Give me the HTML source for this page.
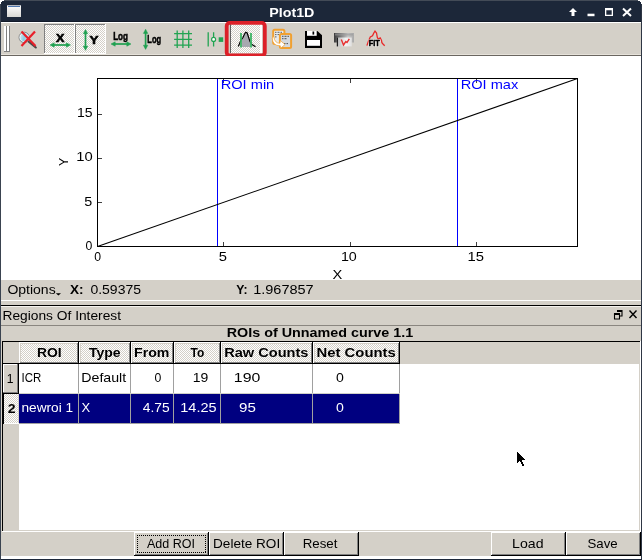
<!DOCTYPE html>
<html><head><meta charset="utf-8"><style>
html,body{margin:0;padding:0;width:642px;height:560px;overflow:hidden;background:#d4d0c8}
svg{display:block;will-change:transform;font-family:"Liberation Sans",sans-serif}
</style></head><body>
<svg width="642" height="560" viewBox="0 0 642 560" font-family="Liberation Sans, sans-serif">
<rect x="0" y="0" width="642" height="560" fill="#d4d0c8"/>
<rect x="0" y="0" width="642" height="22" fill="#1c2739"/>
<rect x="0" y="0" width="642" height="1" fill="#434b57"/>
<rect x="0" y="21" width="642" height="1" fill="#121a28"/>
<rect x="0" y="22" width="642" height="1" fill="#ffffff"/>
<rect x="0" y="0" width="1" height="560" fill="#1c2739"/>
<rect x="641" y="0" width="1" height="560" fill="#2e3644"/>
<rect x="0" y="559" width="642" height="1" fill="#1c2739"/>
<rect x="0" y="4" width="1" height="556" fill="#3a4350"/>
<path d="M0 0 H4 V1 H2 V2 H1 V4 H0 Z" fill="#ffffff"/><path d="M638 0 H642 V4 H641 V2 H640 V1 H638 Z" fill="#ffffff"/>
<defs><linearGradient id="wig" x1="0" y1="0" x2="0" y2="1"><stop offset="0" stop-color="#ffffff"/><stop offset="1" stop-color="#d8d8d4"/></linearGradient><pattern id="chk" x="0" y="0" width="2" height="2" patternUnits="userSpaceOnUse"><rect width="2" height="2" fill="#ffffff"/><rect width="1" height="1" fill="#d4d0c8"/><rect x="1" y="1" width="1" height="1" fill="#d4d0c8"/></pattern><linearGradient id="mag" x1="0" y1="0" x2="1" y2="0.3"><stop offset="0" stop-color="#f0f4f6"/><stop offset="0.6" stop-color="#8ccce4"/><stop offset="1" stop-color="#c8e4ee"/></linearGradient><linearGradient id="prn" x1="0" y1="0" x2="1" y2="0"><stop offset="0" stop-color="#606060"/><stop offset="0.5" stop-color="#d8d8d8"/><stop offset="1" stop-color="#909090"/></linearGradient></defs>
<rect x="7" y="5" width="14" height="12" fill="url(#wig)"/>
<rect x="7" y="5" width="14" height="1" fill="#b4b8c0"/>
<rect x="8" y="6" width="12" height="1" fill="#5078b0"/>
<text x="269.20" y="17" textLength="45.19" lengthAdjust="spacingAndGlyphs" font-size="13" font-weight="bold" fill="#ffffff">Plot1D</text>
<path d="M573 8 L569 12 L571.5 12 L571.5 16 L574.5 16 L574.5 12 L577 12 Z" fill="#fff"/>
<rect x="587.5" y="13.7" width="7" height="2.5" fill="#fff"/>
<path d="M605 8 H613 V16 H605 Z M606.3 10.2 V14.8 H611.7 V10.2 Z" fill="#fff" fill-rule="evenodd"/>
<path d="M623 8.5 L631 16 M631 8.5 L623 16" stroke="#fff" stroke-width="2"/>
<rect x="1" y="55" width="640" height="1" fill="#6a6660"/>
<rect x="1" y="54" width="640" height="1" fill="#e6e2da"/>
<rect x="4" y="26" width="2" height="26" fill="#fff"/><rect x="6" y="26" width="1" height="26" fill="#808080"/>
<rect x="7" y="26" width="2" height="26" fill="#fff"/><rect x="9" y="26" width="1" height="26" fill="#808080"/>
<rect x="4" y="51" width="6" height="1" fill="#808080"/>
<line x1="28.5" y1="41.5" x2="35.8" y2="47.5" stroke="#484848" stroke-width="2.1" stroke-linecap="round"/>
<circle cx="24.2" cy="37.4" r="5.2" fill="url(#mag)" stroke="#8a8a8a" stroke-width="1"/>
<circle cx="24.2" cy="37.4" r="4.2" fill="none" stroke="#ffffff" stroke-width="0.8" opacity="0.8"/>
<path d="M21.5 31.5 L35.5 46 M35 31.5 L21.5 46" stroke="#e8202a" stroke-width="2.2"/>
<rect x="44" y="24" width="31" height="30" fill="url(#chk)"/><rect x="44" y="24" width="31" height="1" fill="#808080"/><rect x="44" y="24" width="1" height="30" fill="#808080"/><rect x="74" y="24" width="1" height="30" fill="#ffffff"/><rect x="44" y="53" width="31" height="1" fill="#ffffff"/>
<rect x="75" y="24" width="31" height="30" fill="url(#chk)"/><rect x="75" y="24" width="31" height="1" fill="#808080"/><rect x="75" y="24" width="1" height="30" fill="#808080"/><rect x="105" y="24" width="1" height="30" fill="#ffffff"/><rect x="75" y="53" width="31" height="1" fill="#ffffff"/>
<text x="56.10" y="41.5" textLength="8.39" lengthAdjust="spacingAndGlyphs" font-size="11" font-weight="bold" fill="#000" stroke="#000" stroke-width="0.6">X</text>
<line x1="53" y1="45" x2="67.5" y2="45" stroke="#1fa050" stroke-width="1.7"/><path d="M50 45 L54.2 42.8 L54.2 47.2 Z M70.5 45 L66.3 42.8 L66.3 47.2 Z" fill="#1fa050" stroke="#1fa050" stroke-width="0.5" stroke-linejoin="round"/>
<line x1="85.5" y1="32.5" x2="85.5" y2="47.3" stroke="#1fa050" stroke-width="1.7"/><path d="M85.5 29.5 L83.3 33.7 L87.7 33.7 Z M85.5 50.3 L83.3 46.099999999999994 L87.7 46.099999999999994 Z" fill="#1fa050" stroke="#1fa050" stroke-width="0.5" stroke-linejoin="round"/>
<text x="89.50" y="43.6" textLength="8.99" lengthAdjust="spacingAndGlyphs" font-size="11.5" font-weight="bold" fill="#000" stroke="#000" stroke-width="0.6">Y</text>
<text x="113.16" y="40.2" textLength="14.86" lengthAdjust="spacingAndGlyphs" font-size="11" font-weight="bold" fill="#000" stroke="#000" stroke-width="0.5">Log</text>
<line x1="114" y1="44" x2="128" y2="44" stroke="#1fa050" stroke-width="1.7"/><path d="M111 44 L115.2 41.8 L115.2 46.2 Z M131 44 L126.8 41.8 L126.8 46.2 Z" fill="#1fa050" stroke="#1fa050" stroke-width="0.5" stroke-linejoin="round"/>
<line x1="145.6" y1="32.2" x2="145.6" y2="46.4" stroke="#1fa050" stroke-width="1.7"/><path d="M145.6 29.2 L143.4 33.4 L147.79999999999998 33.4 Z M145.6 49.4 L143.4 45.199999999999996 L147.79999999999998 45.199999999999996 Z" fill="#1fa050" stroke="#1fa050" stroke-width="0.5" stroke-linejoin="round"/>
<text x="147.32" y="43.2" textLength="13.80" lengthAdjust="spacingAndGlyphs" font-size="11" font-weight="bold" fill="#000" stroke="#000" stroke-width="0.5">Log</text>
<path d="M177.2 30.5 V48 M182.9 30.5 V48 M188.7 30.5 V48 M174.1 33.7 H192 M174.1 39.4 H192 M174.1 45.2 H192" stroke="#22a452" stroke-width="1.3"/>
<path d="M208.2 32.2 V46.5 M213.6 32.2 V46.5" stroke="#22a452" stroke-width="1.3"/>
<circle cx="213.6" cy="39.4" r="2" fill="#fff" stroke="#22a452" stroke-width="1.2"/>
<rect x="218.7" y="37.3" width="4.5" height="4.6" fill="#22a452"/>
<rect x="230" y="24" width="31" height="29" fill="url(#chk)"/>
<rect x="230" y="24" width="1" height="29" fill="#606060"/>
<rect x="260" y="24" width="2" height="29" fill="#fff"/>
<path d="M242 47 L242 38.3 L243 37.5 L244.5 34 L245.8 32.2 L247.2 33 L248.5 37 L250 41.5 L250 47 Z" fill="#a8a8b0"/>
<path d="M238.3 46.6 L241 40 L243 37.5 L244.5 34 L245.8 32.2 L247.2 33 L248.5 37 L250 41.5 L252 44.5 L255.5 46.8" fill="none" stroke="#000" stroke-width="1.2"/>
<path d="M241 33 V47.4 M251 33 V47.4" stroke="#3cb464" stroke-width="2" opacity="0.9"/>
<rect x="226.7" y="22.9" width="38.1" height="32.6" rx="3" fill="none" stroke="#dc2028" stroke-width="3.8"/>
<rect x="273.2" y="29.8" width="11.2" height="14.3" rx="1.5" fill="#e8ecf0" stroke="#f0a030" stroke-width="2"/>
<path d="M275 32.3 H282 M275 34.6 H279.5 M275 36.9 H277" stroke="#505050" stroke-width="0.9" stroke-dasharray="1 0.5"/>
<rect x="279.9" y="34" width="11.2" height="13.9" rx="1.5" fill="#d4d8dc" stroke="#f0a030" stroke-width="2"/>
<path d="M282 36.3 H289 M282 38.7 H287 M284 43.6 H288" stroke="#404040" stroke-width="0.9" stroke-dasharray="1 0.5"/>
<path d="M273.8 36.5 Q274.5 43.2 280 43.3 L280.3 40.5 L285 44.6 L280.5 48.3 L280.3 45.8 Q272.5 46 272.2 38 Z" fill="#ffffff" stroke="#f0a030" stroke-width="0.7"/>
<path d="M305 31 H317.4 L322 35.3 V48 H305 Z" fill="#000"/>
<rect x="307" y="31" width="9.7" height="4.8" fill="#fff"/>
<rect x="312.5" y="31.5" width="1.7" height="3.1" fill="#000"/>
<rect x="307" y="40" width="13" height="5.8" fill="#fff"/>
<defs><linearGradient id="pb" x1="0" y1="0" x2="1" y2="0"><stop offset="0" stop-color="#3c3c3c"/><stop offset="0.25" stop-color="#6a6a6a"/><stop offset="0.7" stop-color="#c8c8c8"/><stop offset="1" stop-color="#a8a8a8"/></linearGradient><linearGradient id="pp" x1="0" y1="0" x2="1" y2="0"><stop offset="0" stop-color="#b8b8b8"/><stop offset="0.6" stop-color="#f4f4f4"/><stop offset="1" stop-color="#e0e0e0"/></linearGradient></defs>
<rect x="334" y="33" width="20" height="9.5" fill="url(#pb)"/>
<rect x="335" y="33.5" width="18" height="2" fill="#9a9a9a" opacity="0.6"/>
<rect x="336.8" y="37.5" width="15" height="8.9" fill="url(#pp)"/>
<rect x="336.8" y="37.5" width="1.2" height="8.9" fill="#202020"/>
<path d="M341.3 39.5 L343.5 45 L345.8 41.5 L347 42.5 L349.3 38.8" fill="none" stroke="#e83030" stroke-width="1.4"/>
<path d="M366.9 45.6 L368.5 41 L370.3 37 L372.5 35.8 L373.8 33 L375 31.2 L376.5 33 L377.3 37.3 L378.2 39 L380.2 37.9 L381.5 40.5 L381.9 42.8 L383 44 L384.7 45.7" fill="none" stroke="#e82828" stroke-width="1.3"/>
<text x="368.68" y="45.8" textLength="11.11" lengthAdjust="spacingAndGlyphs" font-size="9" font-weight="bold" fill="#000" stroke="#ffffff" stroke-width="2" stroke-opacity="0.5">FIT</text>
<text x="368.68" y="45.8" textLength="11.11" lengthAdjust="spacingAndGlyphs" font-size="9" font-weight="bold" fill="#000" stroke="#000" stroke-width="0.5">FIT</text>
<rect x="1" y="56" width="640" height="224" fill="#fff"/>
<line x1="217.5" y1="78.5" x2="217.5" y2="246.5" stroke="#0000ff" stroke-width="1"/>
<line x1="457.5" y1="78.5" x2="457.5" y2="246.5" stroke="#0000ff" stroke-width="1"/>
<line x1="97.5" y1="246.5" x2="577.5" y2="78.5" stroke="#000" stroke-width="1.1"/>
<rect x="97.5" y="78.5" width="480" height="168" fill="none" stroke="#000" stroke-width="1"/>
<path d="M223.5 246 V242 M223.5 79 V83 M350.5 246 V242 M350.5 79 V83 M476.5 246 V242 M476.5 79 V83 M98 202.5 H102 M98 158.5 H102 M98 114.5 H102" stroke="#404040" stroke-width="1"/>
<text x="220.68" y="89" textLength="53.58" lengthAdjust="spacingAndGlyphs" font-size="13" font-weight="normal" fill="#0000ff">ROI min</text>
<text x="460.68" y="89" textLength="57.56" lengthAdjust="spacingAndGlyphs" font-size="13" font-weight="normal" fill="#0000ff">ROI max</text>
<text x="76.92" y="117" textLength="15.58" lengthAdjust="spacingAndGlyphs" font-size="13" font-weight="normal" fill="#000">15</text>
<text x="76.26" y="161" textLength="16.47" lengthAdjust="spacingAndGlyphs" font-size="13" font-weight="normal" fill="#000">10</text>
<text x="84.30" y="206" textLength="7.96" lengthAdjust="spacingAndGlyphs" font-size="13" font-weight="normal" fill="#000">5</text>
<text x="85.40" y="250" textLength="6.82" lengthAdjust="spacingAndGlyphs" font-size="13" font-weight="normal" fill="#000">0</text>
<text x="94.20" y="261" textLength="6.82" lengthAdjust="spacingAndGlyphs" font-size="13" font-weight="normal" fill="#000">0</text>
<text x="218.67" y="261" textLength="8.20" lengthAdjust="spacingAndGlyphs" font-size="13" font-weight="normal" fill="#000">5</text>
<text x="340.90" y="261" textLength="15.92" lengthAdjust="spacingAndGlyphs" font-size="13" font-weight="normal" fill="#000">10</text>
<text x="467.46" y="261" textLength="16.47" lengthAdjust="spacingAndGlyphs" font-size="13" font-weight="normal" fill="#000">15</text>
<text x="332.57" y="279" textLength="9.79" lengthAdjust="spacingAndGlyphs" font-size="13" font-weight="normal" fill="#000">X</text>
<text x="0" y="0" font-size="13" transform="translate(68.3 166.1) rotate(-90)" textLength="8.2" lengthAdjust="spacingAndGlyphs">Y</text>
<text x="7.42" y="294" textLength="48.25" lengthAdjust="spacingAndGlyphs" font-size="13" font-weight="normal" fill="#000">Options</text>
<text x="70.10" y="294" textLength="13.54" lengthAdjust="spacingAndGlyphs" font-size="13" font-weight="bold" fill="#000">X:</text>
<text x="90.40" y="294" textLength="50.60" lengthAdjust="spacingAndGlyphs" font-size="13" font-weight="normal" fill="#000">0.59375</text>
<text x="236.30" y="294" textLength="11.28" lengthAdjust="spacingAndGlyphs" font-size="13" font-weight="bold" fill="#000">Y:</text>
<text x="253.18" y="294" textLength="60.48" lengthAdjust="spacingAndGlyphs" font-size="13" font-weight="normal" fill="#000">1.967857</text>
<path d="M55.8 293.2 H61 L58.4 295.6 Z" fill="#000"/>
<rect x="1" y="300" width="640" height="1" fill="#fff"/>
<rect x="1" y="305" width="640" height="1" fill="#000"/>
<rect x="1" y="306" width="640" height="1" fill="#f4f2ee"/>
<rect x="1" y="325" width="640" height="1" fill="#8a8680"/>
<text x="2.54" y="320" textLength="118.46" lengthAdjust="spacingAndGlyphs" font-size="13" font-weight="normal" fill="#000">Regions Of Interest</text>
<path d="M617 310.5 H622 V316 H620 M614.5 313.5 H619.5 V319 H614.5 Z" fill="none" stroke="#000" stroke-width="1.1"/>
<rect x="614.5" y="313.5" width="5" height="1.5" fill="#000"/><rect x="617" y="310.5" width="5" height="1.5" fill="#000"/>
<path d="M629.5 310.5 L636.5 318 M636.5 310.5 L629.5 318" stroke="#000" stroke-width="1.4"/>
<text x="226.70" y="337" textLength="186.57" lengthAdjust="spacingAndGlyphs" font-size="13" font-weight="bold" fill="#000">ROIs of Unnamed curve 1.1</text>
<rect x="2" y="341" width="638" height="190" fill="#000"/>
<rect x="3" y="342" width="636" height="188" fill="#fff"/>
<rect x="3" y="342" width="636" height="22" fill="#d4d0c8"/>
<rect x="3" y="364" width="16" height="166" fill="#d4d0c8"/>
<rect x="3" y="530" width="637" height="1" fill="#d4d0c8"/>
<rect x="639" y="342" width="1" height="189" fill="#d4d0c8"/>
<rect x="2" y="531" width="639" height="1" fill="#fff"/>
<rect x="640" y="341" width="1" height="191" fill="#fff"/>
<rect x="2" y="341" width="638" height="1" fill="#000"/>
<rect x="2" y="341" width="1" height="190" fill="#000"/>
<rect x="19" y="342" width="59" height="21" fill="url(#chk)"/>
<rect x="19" y="342" width="59" height="1" fill="#fff"/>
<rect x="19" y="342" width="1" height="21" fill="#fff"/>
<rect x="20" y="343" width="58" height="1" fill="#d4d0c8"/>
<rect x="20" y="343" width="1" height="19" fill="#d4d0c8"/>
<rect x="77" y="343" width="1" height="20" fill="#808080"/>
<rect x="20" y="362" width="58" height="1" fill="#808080"/>
<rect x="78" y="342" width="1" height="22" fill="#000"/>
<rect x="79" y="342" width="51" height="21" fill="url(#chk)"/>
<rect x="79" y="342" width="51" height="1" fill="#fff"/>
<rect x="79" y="342" width="1" height="21" fill="#fff"/>
<rect x="80" y="343" width="50" height="1" fill="#d4d0c8"/>
<rect x="80" y="343" width="1" height="19" fill="#d4d0c8"/>
<rect x="129" y="343" width="1" height="20" fill="#808080"/>
<rect x="80" y="362" width="50" height="1" fill="#808080"/>
<rect x="130" y="342" width="1" height="22" fill="#000"/>
<rect x="131" y="342" width="42" height="21" fill="url(#chk)"/>
<rect x="131" y="342" width="42" height="1" fill="#fff"/>
<rect x="131" y="342" width="1" height="21" fill="#fff"/>
<rect x="132" y="343" width="41" height="1" fill="#d4d0c8"/>
<rect x="132" y="343" width="1" height="19" fill="#d4d0c8"/>
<rect x="172" y="343" width="1" height="20" fill="#808080"/>
<rect x="132" y="362" width="41" height="1" fill="#808080"/>
<rect x="173" y="342" width="1" height="22" fill="#000"/>
<rect x="174" y="342" width="46" height="21" fill="url(#chk)"/>
<rect x="174" y="342" width="46" height="1" fill="#fff"/>
<rect x="174" y="342" width="1" height="21" fill="#fff"/>
<rect x="175" y="343" width="45" height="1" fill="#d4d0c8"/>
<rect x="175" y="343" width="1" height="19" fill="#d4d0c8"/>
<rect x="219" y="343" width="1" height="20" fill="#808080"/>
<rect x="175" y="362" width="45" height="1" fill="#808080"/>
<rect x="220" y="342" width="1" height="22" fill="#000"/>
<rect x="221" y="342" width="91" height="21" fill="url(#chk)"/>
<rect x="221" y="342" width="91" height="1" fill="#fff"/>
<rect x="221" y="342" width="1" height="21" fill="#fff"/>
<rect x="222" y="343" width="90" height="1" fill="#d4d0c8"/>
<rect x="222" y="343" width="1" height="19" fill="#d4d0c8"/>
<rect x="311" y="343" width="1" height="20" fill="#808080"/>
<rect x="222" y="362" width="90" height="1" fill="#808080"/>
<rect x="312" y="342" width="1" height="22" fill="#000"/>
<rect x="313" y="342" width="86" height="21" fill="url(#chk)"/>
<rect x="313" y="342" width="86" height="1" fill="#fff"/>
<rect x="313" y="342" width="1" height="21" fill="#fff"/>
<rect x="314" y="343" width="85" height="1" fill="#d4d0c8"/>
<rect x="314" y="343" width="1" height="19" fill="#d4d0c8"/>
<rect x="398" y="343" width="1" height="20" fill="#808080"/>
<rect x="314" y="362" width="85" height="1" fill="#808080"/>
<rect x="399" y="342" width="1" height="22" fill="#000"/>
<rect x="3" y="363" width="397" height="1" fill="#000"/>
<rect x="19" y="394" width="381" height="29" fill="#000080"/>
<rect x="78" y="364" width="1" height="60" fill="#a0a0a0"/>
<rect x="130" y="364" width="1" height="60" fill="#a0a0a0"/>
<rect x="173" y="364" width="1" height="60" fill="#a0a0a0"/>
<rect x="220" y="364" width="1" height="60" fill="#a0a0a0"/>
<rect x="312" y="364" width="1" height="60" fill="#a0a0a0"/>
<rect x="399" y="364" width="1" height="60" fill="#a0a0a0"/>
<rect x="19" y="393" width="381" height="1" fill="#d0d0c8"/>
<rect x="19" y="423" width="381" height="1" fill="#a0a0a0"/>
<rect x="3" y="364" width="16" height="30" fill="#d4d0c8"/>
<rect x="3" y="364" width="15" height="1" fill="#fff"/><rect x="3" y="364" width="1" height="29" fill="#fff"/>
<rect x="17" y="364" width="1" height="29" fill="#808080"/><rect x="18" y="364" width="1" height="30" fill="#000"/>
<rect x="3" y="392" width="15" height="1" fill="#808080"/><rect x="3" y="393" width="16" height="1" fill="#000"/>
<rect x="3" y="394" width="16" height="30" fill="url(#chk)"/>
<rect x="3" y="394" width="1" height="30" fill="#000"/>
<rect x="18" y="394" width="1" height="30" fill="#d4d0c8"/>
<rect x="4" y="423" width="15" height="1" fill="#fff"/>
<text x="36.93" y="357" textLength="24.67" lengthAdjust="spacingAndGlyphs" font-size="13" font-weight="bold" fill="#000">ROI</text>
<text x="89.00" y="357" textLength="31.62" lengthAdjust="spacingAndGlyphs" font-size="13" font-weight="bold" fill="#000">Type</text>
<text x="134.11" y="357" textLength="35.33" lengthAdjust="spacingAndGlyphs" font-size="13" font-weight="bold" fill="#000">From</text>
<text x="190.60" y="357" textLength="13.73" lengthAdjust="spacingAndGlyphs" font-size="13" font-weight="bold" fill="#000">To</text>
<text x="224.18" y="357" textLength="84.26" lengthAdjust="spacingAndGlyphs" font-size="13" font-weight="bold" fill="#000">Raw Counts</text>
<text x="316.56" y="357" textLength="79.24" lengthAdjust="spacingAndGlyphs" font-size="13" font-weight="bold" fill="#000">Net Counts</text>
<text x="6.87" y="383" textLength="6.75" lengthAdjust="spacingAndGlyphs" font-size="13" font-weight="normal" fill="#000">1</text>
<text x="21.62" y="382" textLength="19.73" lengthAdjust="spacingAndGlyphs" font-size="13" font-weight="normal" fill="#000">ICR</text>
<text x="81.31" y="382" textLength="44.91" lengthAdjust="spacingAndGlyphs" font-size="13" font-weight="normal" fill="#000">Default</text>
<text x="154.60" y="382" textLength="6.82" lengthAdjust="spacingAndGlyphs" font-size="13" font-weight="normal" fill="#000">0</text>
<text x="192.82" y="382" textLength="15.58" lengthAdjust="spacingAndGlyphs" font-size="13" font-weight="normal" fill="#000">19</text>
<text x="233.88" y="382" textLength="26.48" lengthAdjust="spacingAndGlyphs" font-size="13" font-weight="normal" fill="#000">190</text>
<text x="336.00" y="382" textLength="7.85" lengthAdjust="spacingAndGlyphs" font-size="13" font-weight="normal" fill="#000">0</text>
<text x="7.80" y="413" textLength="7.85" lengthAdjust="spacingAndGlyphs" font-size="13" font-weight="bold" fill="#000">2</text>
<text x="21.45" y="412" textLength="51.70" lengthAdjust="spacingAndGlyphs" font-size="13" font-weight="normal" fill="#fff">newroi 1</text>
<text x="81.40" y="412" textLength="8.67" lengthAdjust="spacingAndGlyphs" font-size="13" font-weight="normal" fill="#fff">X</text>
<text x="142.80" y="412" textLength="26.83" lengthAdjust="spacingAndGlyphs" font-size="13" font-weight="normal" fill="#fff">4.75</text>
<text x="180.28" y="412" textLength="36.33" lengthAdjust="spacingAndGlyphs" font-size="13" font-weight="normal" fill="#fff">14.25</text>
<text x="239.04" y="412" textLength="16.81" lengthAdjust="spacingAndGlyphs" font-size="13" font-weight="normal" fill="#fff">95</text>
<text x="336.00" y="412" textLength="7.85" lengthAdjust="spacingAndGlyphs" font-size="13" font-weight="normal" fill="#fff">0</text>
<rect x="134" y="532" width="75" height="24" fill="#000"/><rect x="134" y="532" width="74" height="23" fill="#fff"/><rect x="135" y="533" width="73" height="22" fill="#808080"/><rect x="135" y="533" width="72" height="21" fill="#d4d0c8"/>
<rect x="209" y="532" width="75" height="24" fill="#000"/><rect x="209" y="532" width="74" height="23" fill="#fff"/><rect x="210" y="533" width="73" height="22" fill="#808080"/><rect x="210" y="533" width="72" height="21" fill="#d4d0c8"/>
<rect x="284" y="532" width="75" height="24" fill="#000"/><rect x="284" y="532" width="74" height="23" fill="#fff"/><rect x="285" y="533" width="73" height="22" fill="#808080"/><rect x="285" y="533" width="72" height="21" fill="#d4d0c8"/>
<rect x="491" y="532" width="75" height="24" fill="#000"/><rect x="491" y="532" width="74" height="23" fill="#fff"/><rect x="492" y="533" width="73" height="22" fill="#808080"/><rect x="492" y="533" width="72" height="21" fill="#d4d0c8"/>
<rect x="566" y="532" width="75" height="24" fill="#000"/><rect x="566" y="532" width="74" height="23" fill="#fff"/><rect x="567" y="533" width="73" height="22" fill="#808080"/><rect x="567" y="533" width="72" height="21" fill="#d4d0c8"/>
<path d="M137 535h1v1h-1z M137 552h1v1h-1z M139 535h1v1h-1z M139 552h1v1h-1z M141 535h1v1h-1z M141 552h1v1h-1z M143 535h1v1h-1z M143 552h1v1h-1z M145 535h1v1h-1z M145 552h1v1h-1z M147 535h1v1h-1z M147 552h1v1h-1z M149 535h1v1h-1z M149 552h1v1h-1z M151 535h1v1h-1z M151 552h1v1h-1z M153 535h1v1h-1z M153 552h1v1h-1z M155 535h1v1h-1z M155 552h1v1h-1z M157 535h1v1h-1z M157 552h1v1h-1z M159 535h1v1h-1z M159 552h1v1h-1z M161 535h1v1h-1z M161 552h1v1h-1z M163 535h1v1h-1z M163 552h1v1h-1z M165 535h1v1h-1z M165 552h1v1h-1z M167 535h1v1h-1z M167 552h1v1h-1z M169 535h1v1h-1z M169 552h1v1h-1z M171 535h1v1h-1z M171 552h1v1h-1z M173 535h1v1h-1z M173 552h1v1h-1z M175 535h1v1h-1z M175 552h1v1h-1z M177 535h1v1h-1z M177 552h1v1h-1z M179 535h1v1h-1z M179 552h1v1h-1z M181 535h1v1h-1z M181 552h1v1h-1z M183 535h1v1h-1z M183 552h1v1h-1z M185 535h1v1h-1z M185 552h1v1h-1z M187 535h1v1h-1z M187 552h1v1h-1z M189 535h1v1h-1z M189 552h1v1h-1z M191 535h1v1h-1z M191 552h1v1h-1z M193 535h1v1h-1z M193 552h1v1h-1z M195 535h1v1h-1z M195 552h1v1h-1z M197 535h1v1h-1z M197 552h1v1h-1z M199 535h1v1h-1z M199 552h1v1h-1z M201 535h1v1h-1z M201 552h1v1h-1z M203 535h1v1h-1z M203 552h1v1h-1z M205 535h1v1h-1z M205 552h1v1h-1z M137 537h1v1h-1z M205 537h1v1h-1z M137 539h1v1h-1z M205 539h1v1h-1z M137 541h1v1h-1z M205 541h1v1h-1z M137 543h1v1h-1z M205 543h1v1h-1z M137 545h1v1h-1z M205 545h1v1h-1z M137 547h1v1h-1z M205 547h1v1h-1z M137 549h1v1h-1z M205 549h1v1h-1z M137 551h1v1h-1z M205 551h1v1h-1z" fill="#000"/>
<rect x="1" y="556" width="640" height="3" fill="#fff"/>
<text x="147.00" y="548" textLength="48.03" lengthAdjust="spacingAndGlyphs" font-size="13" font-weight="normal" fill="#000">Add ROI</text>
<text x="213.06" y="548" textLength="67.11" lengthAdjust="spacingAndGlyphs" font-size="13" font-weight="normal" fill="#000">Delete ROI</text>
<text x="302.78" y="548" textLength="34.69" lengthAdjust="spacingAndGlyphs" font-size="13" font-weight="normal" fill="#000">Reset</text>
<text x="512.11" y="548" textLength="31.39" lengthAdjust="spacingAndGlyphs" font-size="13" font-weight="normal" fill="#000">Load</text>
<text x="587.48" y="548" textLength="30.17" lengthAdjust="spacingAndGlyphs" font-size="13" font-weight="normal" fill="#000">Save</text>
<path d="M517 452 H518 V453 H519 V454 H520 V455 H521 V456 H522 V457 H523 V458 H524 V459 H525 V460 H522 V462 H523 V464 H524 V466 H522 V464 H521 V462 H520 V461 H519 V462 H518 V463 H517 Z" fill="#000"/>
</svg></body></html>
